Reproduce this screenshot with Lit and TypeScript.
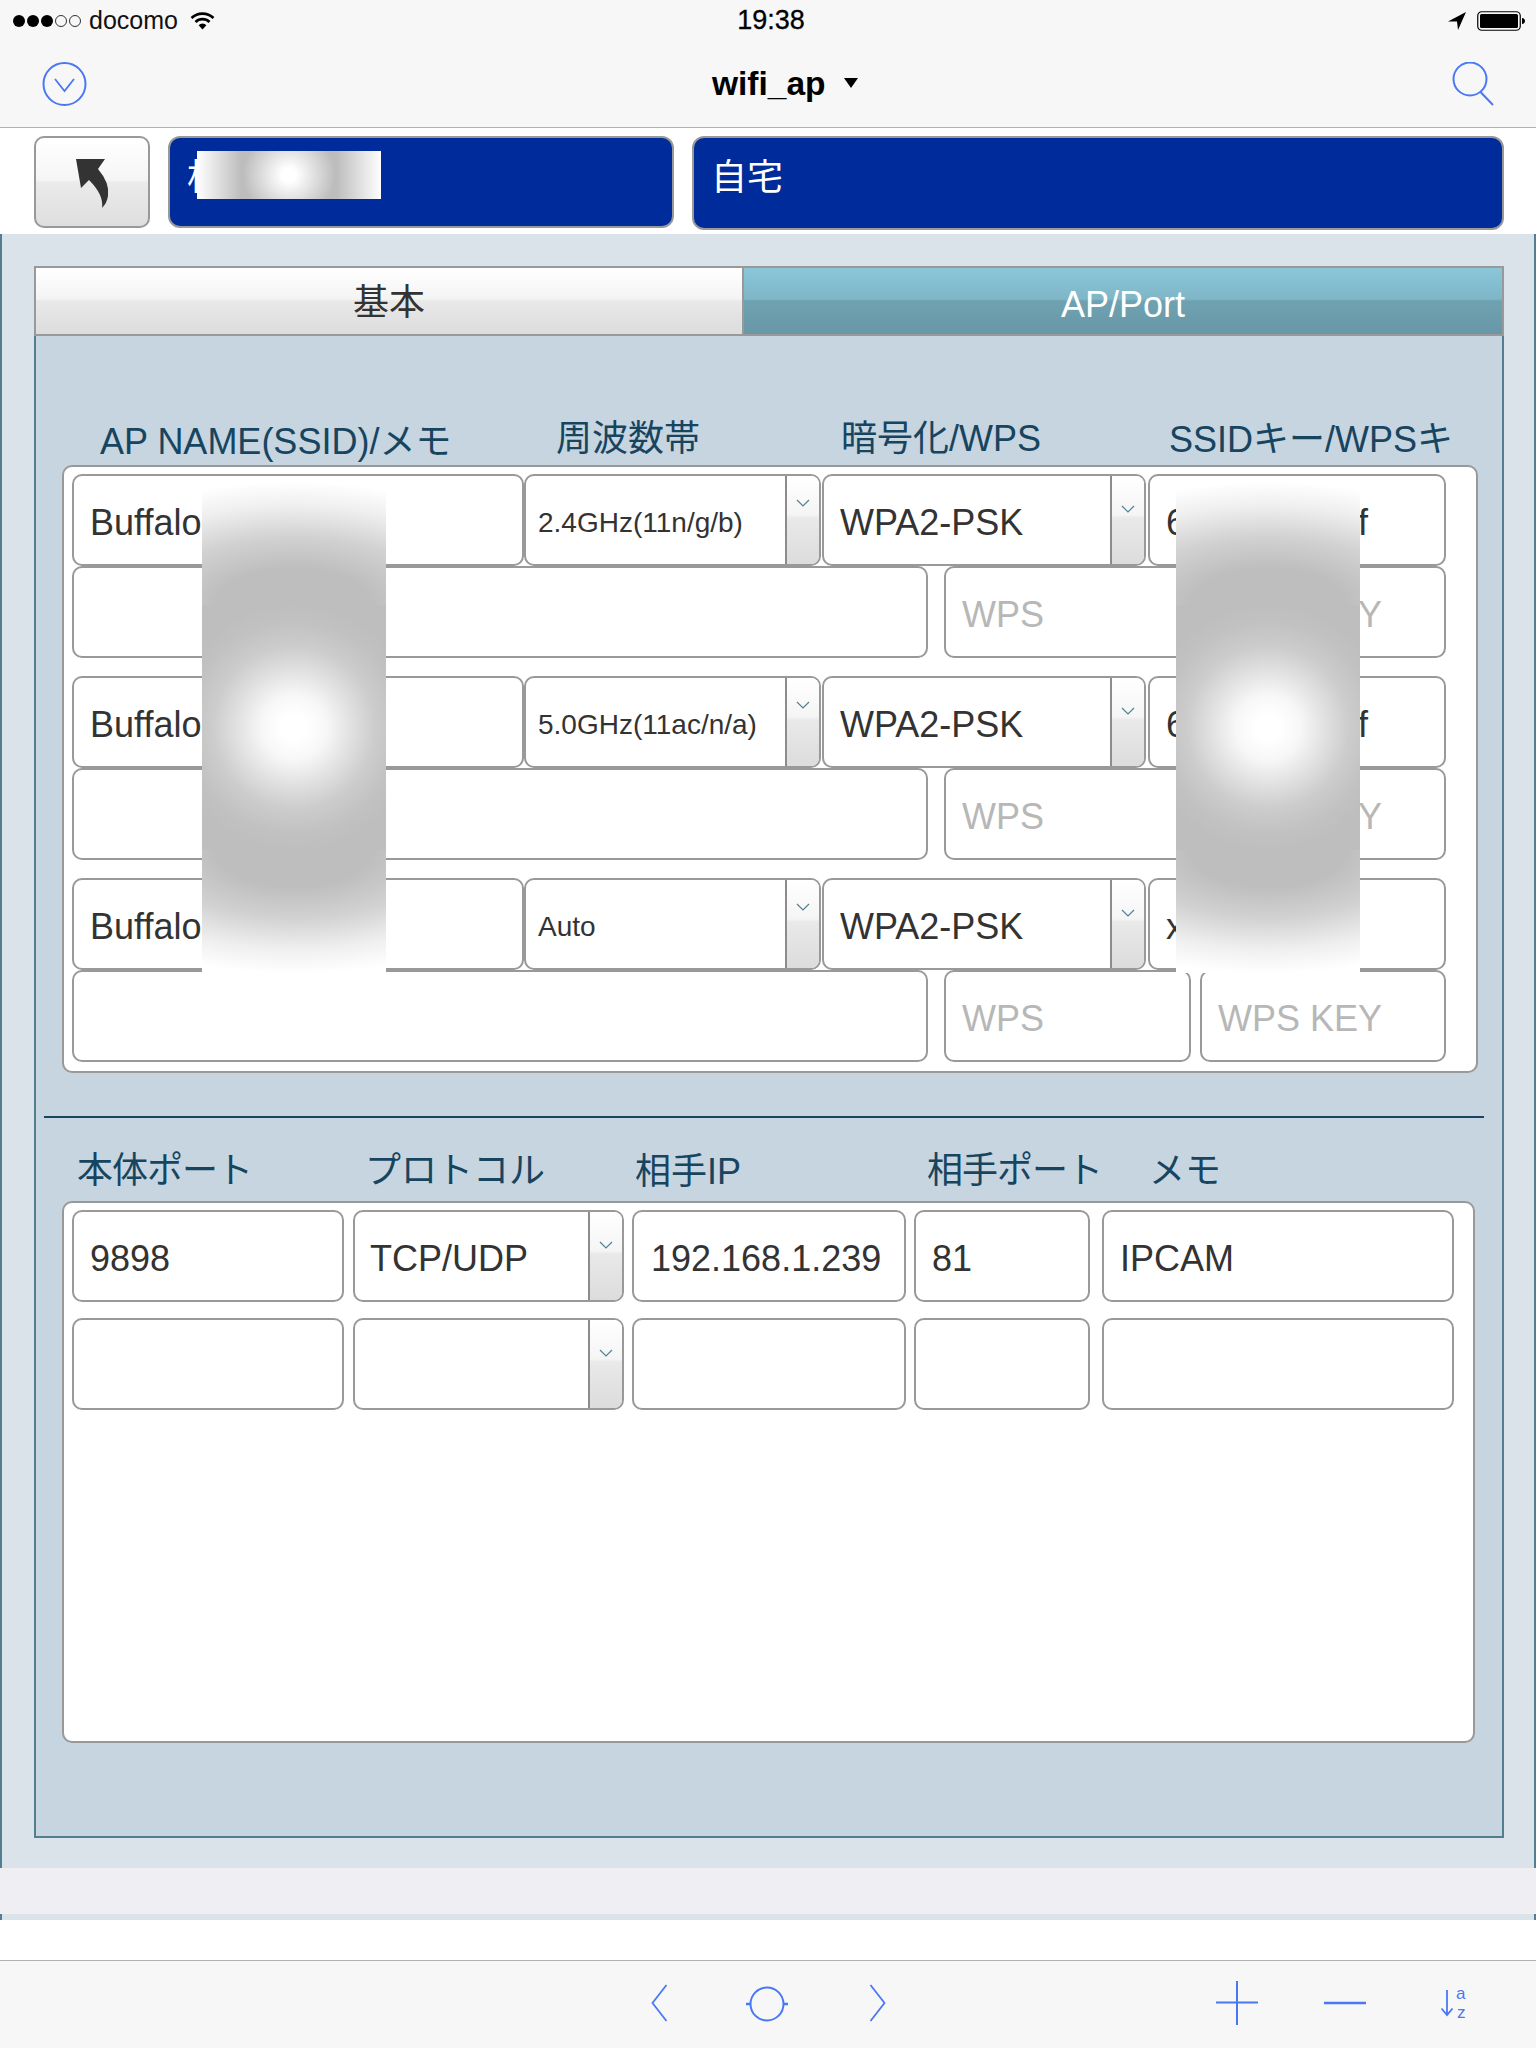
import { LitElement, html, css } from "lit";
import { customElement } from "lit/decorators.js";

const chev = html`<svg class="chev" width="14" height="8" viewBox="0 0 14 8"><path d="M1 1L7 7L13 1" fill="none" stroke="#4f8296" stroke-width="1.2"/></svg>`;

@customElement("app-root")
export class AppRoot extends LitElement {
  static styles = css`
    :host { display: block; width: 1536px; height: 2048px; background: #fff; overflow: hidden; position: relative;
      font-family: "Liberation Sans", "Noto Sans CJK JP", sans-serif; color: #333; }
    * { box-sizing: border-box; }
    .top { background: #f7f7f7; height: 128px; border-bottom: 1px solid #b2b2b2; }
    .status { height: 41px; position: relative; display: flex; align-items: center; color: #111; font-size: 25px; padding: 0 11px 0 13px; }
    .dots { display: flex; gap: 2px; margin-right: 8px; }
    .dot { width: 12px; height: 12px; border-radius: 50%; background: #000; }
    .dot.off { background: transparent; border: 1px solid #333; }
    .wifi { margin-left: 12px; }
    .time { position: absolute; left: 6px; right: 0; text-align: center; font-size: 27px; -webkit-text-stroke: .3px #000; color: #000; }
    .right { margin-left: auto; display: flex; align-items: center; gap: 11px; }
    .nav { height: 86px; display: flex; align-items: center; padding: 0 40px 0 42px; position: relative; }
    .nav .spacer { flex: 1; }
    .title { position: absolute; left: 712px; top: 21px; font-size: 33.5px; font-weight: 700; color: #000; display: flex; align-items: center; gap: 18px; line-height: 44px; }
    .tri { width: 0; height: 0; border-left: 7px solid transparent; border-right: 7px solid transparent; border-top: 10px solid #000; margin-top: -2px; }
    .head { height: 106px; padding: 8px 0 0 34px; display: flex; gap: 18px; align-items: flex-start; background: #fff; }
    .back { width: 116px; height: 92px; border: 2px solid #999; border-radius: 10px; display: flex; align-items: center; justify-content: center;
      background: linear-gradient(180deg, #fff 0, #f5f5f5 48%, #ebebeb 50%, #dedede 100%); padding: 4px 0 0 2px; }
    .blue { background: #002c9b; border: 2px solid #999; border-radius: 12px; color: #fff; font-size: 36px; line-height: 52px; position: relative; }
    .b1 { width: 506px; height: 92px; padding: 14px 0 0 17px; }
    .b2 { width: 812px; height: 94px; padding: 14px 0 0 17px; }
    .hb { position: absolute; left: 27px; top: 13px; width: 184px; height: 48px;
      background: radial-gradient(circle 46px at 50% 50%, #fff 0, #fff 15%, rgba(255,255,255,0) 100%),
        linear-gradient(90deg, #fff 0, #bdbdbd 24%, #bdbdbd 76%, #fff 100%); }
    .page { height: 1634px; background: #dbe3ea; border-left: 2px solid #527f8f; border-right: 2px solid #527f8f; padding: 32px 0 0 32px; }
    .panel { width: 1470px; height: 1572px; background: #c6d5df; border: 2px solid #527f8f; border-top: 0; }
    .tabs { display: flex; height: 70px; margin: 0 -2px 0 -2px; }
    .tab { border: 2px solid #999; font-size: 36px; display: flex; justify-content: center; align-items: center; }
    .t1 { width: 708px; border-right: 0; padding: 0 0 4px 0; color: #333;
      background: linear-gradient(180deg, #fff 0, #f4f4f4 47%, #e9e9e9 50%, #dcdcdc 100%); }
    .t2 { width: 762px; color: #fff; padding: 8px 0 0 0;
      background: linear-gradient(180deg, #8ac6d9 0, #7fb6c8 47%, #6fa2b1 50%, #6897a7 100%); }
    .labels { display: flex; color: #17445f; font-size: 36px; white-space: nowrap; }
    .l1 { height: 129px; padding: 0 0 0 64px; align-items: flex-end; }
    .l1 span { display: block; line-height: 46px; }
    .l1 .c1 { width: 456px; }
    .l1 .c2 { width: 285px; padding-bottom: 3px; }
    .l1 .c3 { width: 328px; padding-bottom: 3px; }
    .l1 .c4 { padding-bottom: 2px; }
    .box { background: #fff; border: 2px solid #999; border-radius: 10px; margin-left: 26px; padding: 7px 7px 7px 8px; position: relative; }
    .b-a { width: 1416px; height: 608px; display: flex; flex-direction: column; gap: 18px; }
    .group { display: flex; flex-direction: column; }
    .row { display: flex; height: 92px; }
    .f { height: 92px; border: 2px solid #999; border-radius: 10px; background: #fff; font-size: 36px; display: flex; align-items: center; padding: 5px 0 0 16px; white-space: nowrap; overflow: hidden; flex: none; }
    .ph { color: #b7b7b7; }
    .name { width: 452px; }
    .freq { width: 297px; margin-right: 1px; }
    .enc { width: 324px; margin-right: 2px; }
    .key { width: 298px; gap: 172px; }
    .memo { width: 856px; margin-right: 16px; }
    .wps { width: 247px; margin-right: 9px; }
    .wkey { width: 246px; }
    .f.sel { padding: 0; justify-content: space-between; }
    .txt { padding: 5px 0 0 16px; flex: 1; }
    .txt.small { font-size: 28px; padding-left: 12px; }
    .p2 .txt { padding-left: 15px; }
    .arrow { width: 34px; height: 100%; border-left: 2px solid #8c8c8c; flex: none; display: flex; justify-content: center; align-items: flex-start; padding-top: 29px;
      background: linear-gradient(180deg, #fff 0, #f5f5f5 44%, #e9e9e9 48%, #dcdcdc 100%); }
    .arrow.hi { padding-top: 23px; }
    .rule { height: 2px; width: 1440px; background: #17445f; margin: 43px 0 0 8px; }
    .l2 { height: 83px; padding: 0 0 0 41px; align-items: center; }
    .l2 span { display: block; line-height: 46px; padding-top: 22px; }
    .l2 .c1 { width: 288px; letter-spacing: -1px; }
    .l2 .c2 { width: 270px; }
    .l2 .c3 { width: 292px; padding-top: 24px; }
    .l2 .c4 { width: 222px; letter-spacing: -1px; }
    .b-b { width: 1413px; height: 542px; display: flex; flex-direction: column; gap: 16px; }
    .p1 { width: 272px; margin-right: 9px; }
    .p2 { width: 271px; margin-right: 8px; }
    .p3 { width: 274px; margin-right: 8px; padding-left: 17px; }
    .p4 { width: 176px; margin-right: 12px; }
    .p5 { width: 352px; }
    .blur { position: absolute; top: 482px; width: 184px; height: 491px;
      background:
        radial-gradient(circle 125px at 50% 50%, #fff 0, #fff 10%, rgba(255,255,255,.88) 26%, rgba(255,255,255,.55) 45%, rgba(255,255,255,.22) 65%, rgba(255,255,255,.05) 85%, rgba(255,255,255,0) 100%),
        linear-gradient(180deg, transparent 25%, #bebebe 25%, #bebebe 75%, transparent 75%),
        radial-gradient(ellipse 260px 123px at 50% 25%, #bebebe 0, #bebebe 30%, rgba(190,190,190,.7) 55%, rgba(190,190,190,.25) 80%, rgba(190,190,190,0) 100%),
        radial-gradient(ellipse 260px 123px at 50% 75%, #bebebe 0, #bebebe 30%, rgba(190,190,190,.7) 55%, rgba(190,190,190,.25) 80%, rgba(190,190,190,0) 100%),
        #fff; }
    .bl1 { left: 202px; }
    .bl2 { left: 1176px; }
    .band { height: 46px; background: #efeef3; }
    .page2 { height: 6px; background: #dbe3ea; border-left: 2px solid #527f8f; border-right: 2px solid #527f8f; }
    .gap { height: 40px; background: #fff; }
    .toolbar { height: 88px; background: #f7f7f7; border-top: 1px solid #b2b2b2; display: flex; align-items: flex-start; padding-left: 650px; }
    .toolbar svg { flex: none; display: block; }
    .i1 { margin-top: 23px; }
    .i2 { margin: 25px 0 0 77px; }
    .i3 { margin: 23px 0 0 80px; }
    .i4 { margin: 20px 0 0 328px; }
    .i5 { margin: 40px 0 0 64px; }
    .i6 { margin: 24px 0 0 72px; }
  `;

  fieldRow(freq: string, k: any) {
    return html`<div class="group">
      <div class="row">
        <div class="f name">Buffalo</div>
        <div class="f sel freq"><span class="txt small">${freq}</span><span class="arrow hi">${chev}</span></div>
        <div class="f sel enc"><span class="txt">WPA2-PSK</span><span class="arrow">${chev}</span></div>
        <div class="f key">${k}</div>
      </div>
      <div class="row">
        <div class="f memo"></div>
        <div class="f wps ph">WPS</div>
        <div class="f wkey ph">WPS KEY</div>
      </div>
    </div>`;
  }

  render() {
    const six = html`<span>6</span><span>f</span>`;
    return html`
      <div class="top">
        <div class="status">
          <div class="dots"><i class="dot"></i><i class="dot"></i><i class="dot"></i><i class="dot off"></i><i class="dot off"></i></div>
          <span>docomo</span>
          <svg class="wifi" width="25" height="18" viewBox="0 0 25 18" fill="none" stroke="#000" stroke-width="2.6">
            <path d="M1.5 6A16 16 0 0 1 23.5 6"/><path d="M5.5 10A10 10 0 0 1 19.5 10"/><path d="M12.5 17.5L8.6 13.2A5.6 5.6 0 0 1 16.4 13.2Z" fill="#000" stroke="none"/>
          </svg>
          <div class="time">19:38</div>
          <div class="right">
            <svg width="18" height="18" viewBox="0 0 18 18"><path d="M18 0L0 9.500L9 9.500L10 18Z" fill="#000"/></svg>
            <svg width="48" height="20" viewBox="0 0 48 20"><rect x=".75" y=".75" width="42.500" height="18.500" rx="4" fill="none" stroke="#000" stroke-width="1.2"/><rect x="3" y="3" width="38" height="14" rx="1.500" fill="#000"/><path d="M45 7C47 7 48 8.500 48 10S47 13 45 13Z" fill="#000"/></svg>
          </div>
        </div>
        <div class="nav">
          <svg width="46" height="46" viewBox="0 0 46 46" fill="none" stroke="#4a78f5" stroke-width="2"><circle cx="22.500" cy="23" r="21"/><path d="M13 18L22.500 30L32 18" stroke-width="1.800"/></svg>
          <div class="title">wifi_ap<i class="tri"></i></div>
          <div class="spacer"></div>
          <svg width="44" height="44" viewBox="0 0 44 44" fill="none" stroke="#4a78f5" stroke-width="2"><circle cx="18" cy="17" r="16.500"/><path d="M28.500 30L41 43"/></svg>
        </div>
      </div>
      <div class="head">
        <div class="back">
          <svg width="34" height="50" viewBox="0 0 34 50"><path d="M0 0L29 0L22 10Q34 24 32 37Q31 44 26 49Q28 36 13 21L5 29Z" fill="#333"/></svg>
        </div>
        <div class="blue b1">相<div class="hb"></div></div>
        <div class="blue b2">自宅</div>
      </div>
      <div class="page">
        <div class="panel">
          <div class="tabs"><div class="tab t1">基本</div><div class="tab t2">AP/Port</div></div>
          <div class="labels l1"><span class="c1">AP NAME(SSID)/メモ</span><span class="c2">周波数帯</span><span class="c3">暗号化/WPS</span><span class="c4">SSIDキー/WPSキ</span></div>
          <div class="box b-a">
            ${this.fieldRow("2.4GHz(11n/g/b)", six)}
            ${this.fieldRow("5.0GHz(11ac/n/a)", six)}
            ${this.fieldRow("Auto", html`<span>x</span>`)}
          </div>
          <div class="rule"></div>
          <div class="labels l2"><span class="c1">本体ポート</span><span class="c2">プロトコル</span><span class="c3">相手IP</span><span class="c4">相手ポート</span><span>メモ</span></div>
          <div class="box b-b">
            <div class="row">
              <div class="f p1">9898</div>
              <div class="f sel p2"><span class="txt">TCP/UDP</span><span class="arrow">${chev}</span></div>
              <div class="f p3">192.168.1.239</div>
              <div class="f p4">81</div>
              <div class="f p5">IPCAM</div>
            </div>
            <div class="row">
              <div class="f p1"></div>
              <div class="f sel p2"><span class="txt"></span><span class="arrow">${chev}</span></div>
              <div class="f p3"></div>
              <div class="f p4"></div>
              <div class="f p5"></div>
            </div>
          </div>
        </div>
      </div>
      <div class="blur bl1"></div>
      <div class="blur bl2"></div>
      <div class="band"></div>
      <div class="page2"></div>
      <div class="gap"></div>
      <div class="toolbar">
        <svg class="i1" width="18" height="38" viewBox="0 0 18 38" fill="none" stroke="#4a78f5" stroke-width="1.800"><path d="M16.500 1L2.500 19L16.500 37"/></svg>
        <svg class="i2" width="44" height="36" viewBox="0 0 44 36" fill="none" stroke="#4a78f5" stroke-width="2"><circle cx="22" cy="18" r="16.500"/><path d="M1 18H5M39 18H43" stroke-width="2.500"/></svg>
        <svg class="i3" width="18" height="38" viewBox="0 0 18 38" fill="none" stroke="#4a78f5" stroke-width="1.800"><path d="M1.500 1L15.500 19L1.500 37"/></svg>
        <svg class="i4" width="44" height="44" viewBox="0 0 44 44" fill="none" stroke="#4a78f5" stroke-width="2"><path d="M22 0V44M1 21.500H43"/></svg>
        <svg class="i5" width="44" height="4" viewBox="0 0 44 4" fill="none" stroke="#4a78f5" stroke-width="2.500"><path d="M1 2H43"/></svg>
        <svg class="i6" width="36" height="36" viewBox="0 0 36 36" fill="none" stroke="#4a78f5" stroke-width="1.800"><path d="M8 5V30M2.500 23.500L8 30L13.500 23.500"/><text x="17" y="14" font-size="17" font-family="Liberation Sans" fill="#4a78f5" stroke="none">a</text><text x="18" y="33" font-size="17" font-family="Liberation Sans" fill="#4a78f5" stroke="none">z</text></svg>
      </div>
    `;
  }
}
